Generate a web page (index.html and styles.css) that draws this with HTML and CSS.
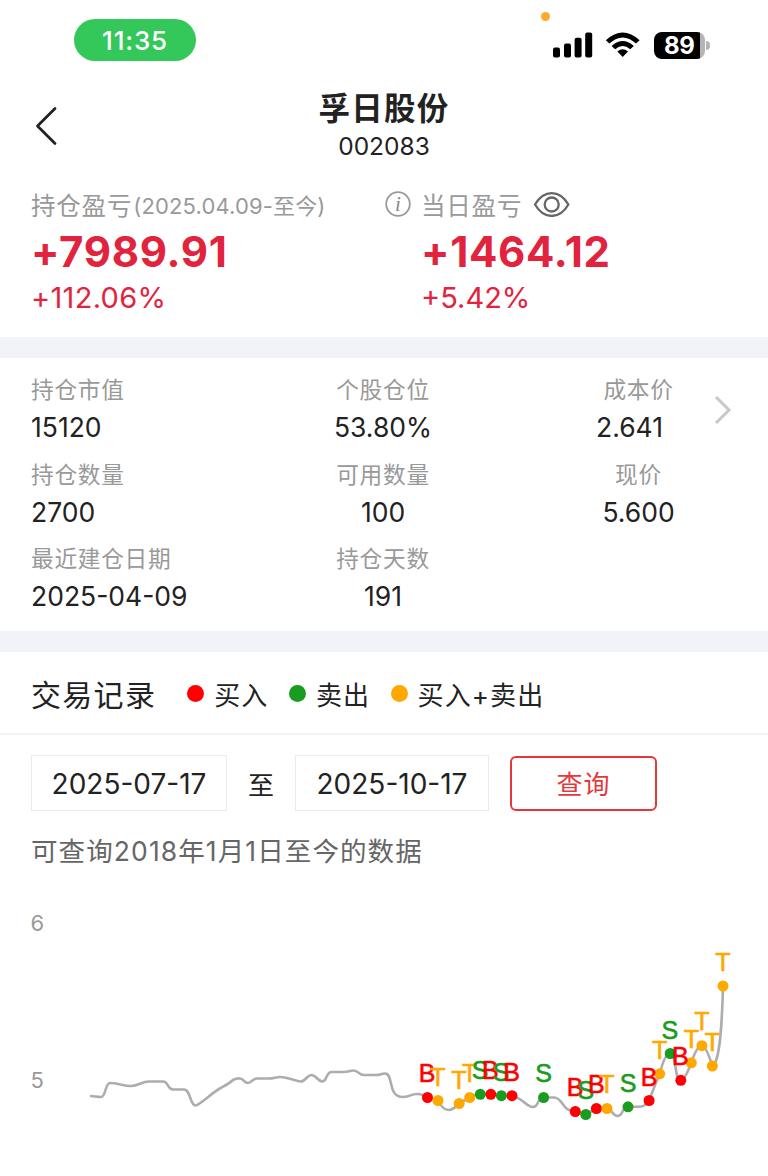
FILE: index.html
```html
<!DOCTYPE html>
<html lang="zh-CN">
<head>
    <meta charset="UTF-8">
    <title>孚日股份 002083</title>
    <link rel="stylesheet" href="styles.css">
</head>
<body>
    <!-- 状态栏 -->
    <div class="status-bar">
        <div class="clock">11:35</div>
        <div class="status-icons">
            <span class="mic-dot"></span>
            <svg class="signal" width="40" height="26" viewBox="0 0 40 26">
                <rect x="0" y="15.5" width="7" height="10" rx="2" />
                <rect x="11" y="11.5" width="7" height="14" rx="2" />
                <rect x="21.6" y="5.7" width="7" height="19.8" rx="2" />
                <rect x="32.2" y="0.5" width="7" height="25" rx="2" />
            </svg>
            <svg class="wifi" width="36" height="26" viewBox="0 0 36 26">
                <path d="M0.8 8.2 Q17.7 -7.4 34.6 8.2 L31 11.6 Q17.7 -0.4 4.4 11.6 Z" />
                <path d="M6.6 13.9 Q17.7 4 28.8 13.9 L25.2 17.3 Q17.7 10.8 10.2 17.3 Z" />
                <path d="M12.4 19.5 Q17.7 15.2 23 19.5 L17.7 24.9 Z" />
            </svg>
            <div class="battery"><span>89</span></div>
            <span class="battery-tip"></span>
        </div>
    </div>

    <!-- 标题 -->
    <div class="header">
        <svg class="back" width="26" height="42" viewBox="0 0 26 42">
            <path d="M21 3.5 L3.5 21 L21 38.5" />
        </svg>
        <div class="title">
            <h1>孚日股份</h1>
            <div class="code">002083</div>
        </div>
    </div>

    <!-- 盈亏 -->
    <div class="profit">
        <div class="profit-item total">
            <div class="profit-label">持仓盈亏<span class="range">(2025.04.09-至今)</span></div>
            <div class="profit-value">+7989.91</div>
            <div class="profit-rate">+112.06%</div>
        </div>
        <svg class="info" width="26" height="26" viewBox="0 0 26 26">
            <circle cx="13" cy="13" r="11.8" />
            <text x="13" y="20">i</text>
        </svg>
        <div class="profit-item today">
            <div class="profit-label">当日盈亏
                <svg class="eye" width="38" height="26" viewBox="0 0 38 26">
                    <path d="M2 13.5 C11 -1.7 26.4 -1.7 35.4 13.5 C26.4 28.7 11 28.7 2 13.5 Z" />
                    <circle cx="18.7" cy="13.5" r="7" />
                </svg>
            </div>
            <div class="profit-value">+1464.12</div>
            <div class="profit-rate">+5.42%</div>
        </div>
    </div>

    <!-- 持仓信息 -->
    <div class="position">
        <div class="cell"><label>持仓市值</label><b>15120</b></div>
        <div class="cell"><label>个股仓位</label><b>53.80%</b></div>
        <div class="cell cost"><label>成本价</label><b>2.641</b></div>
        <div class="cell"><label>持仓数量</label><b>2700</b></div>
        <div class="cell"><label>可用数量</label><b>100</b></div>
        <div class="cell"><label>现价</label><b>5.600</b></div>
        <div class="cell"><label>最近建仓日期</label><b>2025-04-09</b></div>
        <div class="cell"><label>持仓天数</label><b>191</b></div>
        <svg class="more" width="20" height="32" viewBox="0 0 20 32">
            <path d="M2 3 L15 16 L2 29" />
        </svg>
    </div>

    <!-- 交易记录 -->
    <div class="record-head">
        <h2>交易记录</h2>
        <span class="legend buy">买入</span>
        <span class="legend sell">卖出</span>
        <span class="legend both">买入+卖出</span>
    </div>

    <div class="query">
        <div class="date">2025-07-17</div>
        <span class="to">至</span>
        <div class="date end">2025-10-17</div>
        <button class="query-btn">查询</button>
    </div>
    <div class="tip">可查询2018年1月1日至今的数据</div>

    <!-- 价格走势 -->
    <svg class="chart" width="768" height="296" viewBox="0 880 768 296">
        <text class="axis" x="30.5" y="931">6</text>
        <text class="axis" x="30.5" y="1088">5</text>
        <path class="line" d="M90 1096 C94 1096 97 1097 101 1097 C106 1097 105 1083 110 1083
            C117 1083 124 1086 131.5 1086 C138 1086 142 1081.5 149 1081.5 L163 1081.5
            C169 1081.5 167 1089.5 173 1089.5 L184 1089.5 C190.5 1089.5 190 1105.5 195.5 1105.5
            C199 1105.5 212 1093 219 1089 C226 1085 230 1083 233 1080 Q237 1078 240 1078.5
            C244 1079 244 1083 248 1083 C252 1083 252 1078.5 257 1078.5 L269 1078.5
            C274 1078.5 276 1077 280 1077 C289 1077 295 1081.5 301 1081.5
            C305.5 1081.5 307 1075 311.5 1075 C316 1075 318 1081.5 322.5 1081.5
            C327 1081.5 326 1072 331.5 1072 L344 1072 C348 1072 350 1070.5 353.5 1070.5
            C359 1070.5 358 1075 364 1075 L376 1075 C381 1075 381 1073.5 385 1073.5
            C394 1073.5 387 1097 403 1097 C411 1097 410 1094 417 1094 Q423 1094 427.5 1097.5
            L438 1100.5 Q443 1110 448.5 1110 Q453 1110 459.2 1103.5 L469.7 1097.5
            Q474 1094.5 480.3 1094.3 L490.8 1094.3 L501.4 1095.7 L512 1095.7
            C523 1098 526 1107 533 1107 C539 1107 537 1097.5 543.6 1097.5 L554 1097.5
            C563 1097.5 562 1111.5 575.3 1111.5 L585.8 1114.5 L596.4 1108.5 L607 1108.5
            C612 1108.5 612 1116 617.5 1116 C623 1116 622 1106.8 628 1106.8 L639 1106.8
            Q646 1106.5 649.1 1100.5 Q657 1080 659.7 1073.8 Q665 1053 670.2 1053.5
            C677 1054 674 1080.3 680.8 1080.3 Q685 1080 691.3 1062.8 Q697 1045.5 701.9 1045.7
            Q706 1045.7 712.4 1066 C720 1062 722 1024 723 986" />
        <g class="dots buy">
            <circle cx="427.5" cy="1097.5" r="5.5" />
            <circle cx="490.8" cy="1094.3" r="5.5" />
            <circle cx="512" cy="1095.7" r="5.5" />
            <circle cx="575.3" cy="1111.5" r="5.5" />
            <circle cx="596.4" cy="1108.5" r="5.5" />
            <circle cx="649.1" cy="1100.5" r="5.5" />
            <circle cx="680.8" cy="1080.3" r="5.5" />
        </g>
        <g class="dots sell">
            <circle cx="480.3" cy="1094.3" r="5.5" />
            <circle cx="501.4" cy="1095.7" r="5.5" />
            <circle cx="543.6" cy="1097.5" r="5.5" />
            <circle cx="585.8" cy="1114.5" r="5.5" />
            <circle cx="628" cy="1106.8" r="5.5" />
            <circle cx="670.2" cy="1053.5" r="5.5" />
        </g>
        <g class="dots both">
            <circle cx="438" cy="1100.5" r="5.5" />
            <circle cx="459.2" cy="1103.5" r="5.5" />
            <circle cx="469.7" cy="1097.5" r="5.5" />
            <circle cx="607" cy="1108.5" r="5.5" />
            <circle cx="659.7" cy="1073.8" r="5.5" />
            <circle cx="691.3" cy="1062.8" r="5.5" />
            <circle cx="701.9" cy="1045.7" r="5.5" />
            <circle cx="712.4" cy="1066" r="5.5" />
            <circle cx="723" cy="986" r="5.5" />
        </g>
        <g class="marks">
            <text class="buy" x="427" y="1082">B</text>
            <text class="both" x="438" y="1085.5">T</text>
            <text class="both" x="459" y="1088.5">T</text>
            <text class="both" x="469.7" y="1082">T</text>
            <text class="sell" x="480" y="1079">S</text>
            <text class="buy" x="490.3" y="1079">B</text>
            <text class="sell" x="501" y="1080.5">S</text>
            <text class="buy" x="511.5" y="1080.5">B</text>
            <text class="sell" x="543.6" y="1082">S</text>
            <text class="buy" x="575" y="1096">B</text>
            <text class="sell" x="585.8" y="1099">S</text>
            <text class="buy" x="596.4" y="1093">B</text>
            <text class="both" x="607" y="1093">T</text>
            <text class="sell" x="628" y="1091.5">S</text>
            <text class="buy" x="649" y="1085.5">B</text>
            <text class="both" x="659.7" y="1058.5">T</text>
            <text class="sell" x="669.8" y="1038.5">S</text>
            <text class="buy" x="680.3" y="1064.5">B</text>
            <text class="both" x="691.3" y="1047.5">T</text>
            <text class="both" x="702" y="1030">T</text>
            <text class="both" x="712.4" y="1050.5">T</text>
            <text class="both" x="723" y="971">T</text>
        </g>
    </svg>
</body>
</html>
```
FILE: styles.css
```css
:root {
    --rise: #e2233e;
    --text: #222;
    --muted: #999;
    --band: #f2f3f8;
    --buy: #ff0000;
    --sell: #1a9c20;
    --both: #ffa800;
}

* {
    box-sizing: border-box;
}

body {
    margin: 0;
    width: 768px;
    height: 1176px;
    overflow: hidden;
    background: #fff;
    color: var(--text);
    font-family: Inter, "Noto Sans CJK SC", sans-serif;
}

svg {
    display: block;
    flex: none;
}

/* 状态栏 */
.status-bar {
    display: flex;
    justify-content: space-between;
    height: 80px;
    padding: 19px 58px 0 74px;
}

.clock {
    width: 122px;
    height: 42px;
    border-radius: 21px;
    background: #34c759;
    color: #fff;
    font-size: 26px;
    font-weight: 500;
    line-height: 43px;
    letter-spacing: 0.8px;
    text-align: center;
}

.status-icons {
    position: relative;
    display: flex;
    align-items: center;
    height: 52px;
}

.mic-dot {
    position: absolute;
    left: -12px;
    top: -7px;
    width: 9px;
    height: 9px;
    border-radius: 50%;
    background: #ffa92f;
}

.wifi {
    margin-left: 12px;
}

.battery {
    width: 51px;
    height: 27px;
    margin-left: 13px;
    border-radius: 8px;
    background: linear-gradient(90deg, #000 46px, #b5b5b5 46px);
    color: #fff;
    font-size: 24px;
    font-weight: 700;
    line-height: 28px;
    padding-left: 10px;
    letter-spacing: -0.3px;
}

.battery-tip {
    width: 4px;
    height: 9px;
    margin-left: 1px;
    border-radius: 0 5px 5px 0;
    background: #b5b5b5;
}

/* 标题 */
.header {
    display: flex;
    height: 96px;
    padding: 25px 36px 0 34px;
}

.back path {
    fill: none;
    stroke: #222;
    stroke-width: 2.8;
    stroke-linecap: round;
    stroke-linejoin: round;
}

.title {
    flex: 1;
    margin: -16px 24px 0 0;
    text-align: center;
}

h1 {
    margin: 0;
    font-size: 31.5px;
    font-weight: 700;
    line-height: 40px;
    letter-spacing: 1.2px;
}

.code {
    font-size: 24.5px;
    line-height: 35px;
}

/* 盈亏 */
.profit {
    display: flex;
    height: 161px;
    padding-left: 31px;
}

.total {
    width: 354px;
}

.info {
    margin: 15px 10px 0 0;
}

.info circle {
    fill: none;
    stroke: #999;
    stroke-width: 1.8;
}

.info text {
    fill: #888;
    font: italic 21px "Liberation Serif", serif;
    text-anchor: middle;
}

.profit-label {
    display: flex;
    align-items: center;
    height: 56px;
    color: var(--muted);
    font-size: 24.5px;
    letter-spacing: 0.8px;
}

.range {
    margin-left: 1px;
    font-size: 22px;
    letter-spacing: 0.15px;
}

.eye {
    margin-left: 11px;
    fill: none;
    stroke: #666;
    stroke-width: 2.3;
    stroke-linejoin: round;
}

.profit-value {
    color: var(--rise);
    font-size: 42px;
    font-weight: 700;
    line-height: 40px;
    letter-spacing: 0.7px;
}

.profit-rate {
    color: var(--rise);
    font-size: 29px;
    line-height: 51px;
}

.total .profit-rate {
    letter-spacing: 0.3px;
}

/* 持仓信息 */
.position {
    position: relative;
    display: grid;
    grid-template-columns: 226px 252px 259px;
    grid-auto-rows: 84.7px;
    height: 315px;
    padding: 12px 0 0 31px;
    border: solid var(--band);
    border-width: 21px 0;
}

.cell {
    display: flex;
    flex-direction: column;
    align-items: center;
    white-space: nowrap;
}

.cell:nth-of-type(3n + 1) {
    align-items: flex-start;
}

.cell label {
    color: var(--muted);
    font-size: 22.7px;
    line-height: 40px;
    letter-spacing: 0.7px;
}

.cell b {
    font-size: 26.5px;
    font-weight: 400;
    line-height: 35px;
}

.cost b {
    padding-right: 18px;
}

.more {
    position: absolute;
    left: 714px;
    top: 36px;
    fill: none;
    stroke: #c8c8c8;
    stroke-width: 3;
}

/* 交易记录 */
.record-head {
    display: flex;
    align-items: center;
    height: 83px;
    padding-left: 31px;
    border-bottom: 2px solid #f4f4f5;
}

h2 {
    margin: 0 31px 0 0;
    font-size: 30px;
    font-weight: 400;
    letter-spacing: 1.3px;
}

.legend {
    display: flex;
    align-items: center;
    margin-right: 20.5px;
    padding-top: 1px;
    font-size: 26px;
    letter-spacing: 1.1px;
}

.legend::before {
    content: "";
    width: 17px;
    height: 17px;
    margin-right: 10px;
    border-radius: 50%;
}

.legend.buy::before {
    background: var(--buy);
}

.legend.sell::before {
    background: var(--sell);
}

.legend.both::before {
    background: var(--both);
}

.query {
    display: flex;
    align-items: center;
    height: 56px;
    margin: 20px 0 0 31px;
    font-size: 28px;
}

.date {
    width: 196px;
    height: 56px;
    border: 1px solid #ebebeb;
    line-height: 56px;
    text-align: center;
}

.date.end {
    width: 194px;
}

.to {
    width: 68px;
    font-size: 26px;
    text-align: center;
}

.query-btn {
    width: 147px;
    height: 55px;
    margin: 0 0 0 21px;
    padding: 0 0 1px;
    border: 2px solid #e5383b;
    border-radius: 6px;
    background: #fff;
    color: #e5383b;
    font: 26px "Noto Sans CJK SC", sans-serif;
    letter-spacing: 1px;
}

.tip {
    height: 69px;
    padding-left: 31px;
    color: #666;
    font-size: 26.5px;
    line-height: 80px;
    letter-spacing: 1.1px;
}

/* 价格走势 */
.axis {
    fill: #999;
    font-size: 22px;
}

.line {
    fill: none;
    stroke: #adadaf;
    stroke-width: 2.6;
    stroke-linejoin: round;
}

.chart .buy {
    fill: var(--buy);
    stroke: var(--buy);
}

.chart .sell {
    fill: var(--sell);
    stroke: var(--sell);
}

.chart .both {
    fill: var(--both);
    stroke: var(--both);
}

.chart .dots {
    stroke: none;
}

.marks {
    font-family: "Liberation Sans", Arial, sans-serif;
    font-size: 25px;
    stroke-width: 0.6;
    text-anchor: middle;
}
```
